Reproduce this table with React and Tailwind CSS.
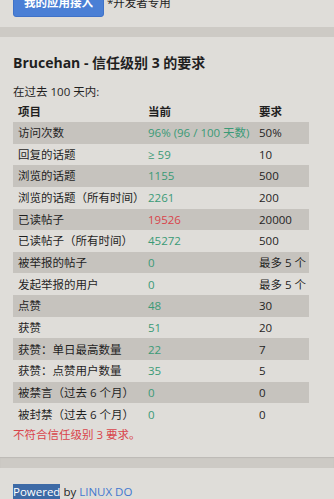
const rows = [
  { name: "访问次数", cur: "96% (96 / 100 天数)", req: "50%" },
  { name: "回复的话题", cur: "≥ 59", req: "10" },
  { name: "浏览的话题", cur: "1155", req: "500" },
  { name: "浏览的话题（所有时间）", cur: "2261", req: "200" },
  { name: "已读帖子", cur: "19526", req: "20000", bad: true },
  { name: "已读帖子（所有时间）", cur: "45272", req: "500" },
  { name: "被举报的帖子", cur: "0", req: "最多 5 个" },
  { name: "发起举报的用户", cur: "0", req: "最多 5 个" },
  { name: "点赞", cur: "48", req: "30" },
  { name: "获赞", cur: "51", req: "20" },
  { name: "获赞：单日最高数量", cur: "22", req: "7" },
  { name: "获赞：点赞用户数量", cur: "35", req: "5" },
  { name: "被禁言（过去 6 个月）", cur: "0", req: "0" },
  { name: "被封禁（过去 6 个月）", cur: "0", req: "0" },
];

export default function App() {
  return (
    <div
      className="h-[499px] w-[334px] overflow-hidden bg-[#dfddd9] text-[11.5px] text-[#1f1f1f]"
      style={{ fontFamily: '"Open Sans", "Noto Sans CJK SC", sans-serif' }}
    >
      <div className="h-[27px] overflow-hidden px-[13px] shadow-[0_1px_2px_rgba(0,0,0,0.12)]">
        <div className="-mt-[11px] flex items-center gap-[3px]">
          <button className="h-[28px] w-[91px] rounded-[3px] border border-[#3f72c8] bg-[#4a7fd5] text-[11.5px] font-bold text-white">
            我的应用接入
          </button>
          <span>*开发者专用</span>
        </div>
      </div>
      <div className="h-[10px] bg-[#cdcac5]" />

      <section className="h-[420px] px-[13px] pt-[17px]">
        <h2 className="h-[18px] text-[14px] font-bold leading-[18px]">Brucehan - 信任级别 3 的要求</h2>
        <p className="mt-[11px] leading-[17px]">在过去 100 天内:</p>
        <table className="mt-[1px] w-[296px] table-fixed border-collapse">
          <thead>
            <tr className="h-[21px] font-bold">
              <th className="w-[130px] pl-[5px] text-left">项目</th>
              <th className="w-[111px] pl-[5px] text-left">当前</th>
              <th className="pl-[5px] text-left">要求</th>
            </tr>
          </thead>
          <tbody>
            {rows.map((r, i) => (
              <tr key={r.name} className={i % 2 === 0 ? "h-[21.65px] bg-[#c6c3be]" : "h-[21.65px]"}>
                <td className="whitespace-nowrap pl-[5px]">{r.name}</td>
                <td className={r.bad ? "whitespace-nowrap pl-[5px] text-[#d9444b]" : "whitespace-nowrap pl-[5px] text-[#3a9a76]"}>
                  {r.cur}
                </td>
                <td className="whitespace-nowrap pl-[5px]">{r.req}</td>
              </tr>
            ))}
          </tbody>
        </table>
        <p className="mt-[1px] leading-[17px] text-[#d9444b]">不符合信任级别 3 要求。</p>
      </section>

      <div className="h-[11px] bg-[#cdcac5] shadow-[inset_0_1px_1px_rgba(0,0,0,0.08)]" />
      <footer className="px-[13px] pt-[16px] leading-[16px]">
        <span className="bg-[#3d6aa6] text-white">Powered</span> by{" "}
        <span className="text-[#3f78d0]">LINUX DO</span>
      </footer>
    </div>
  );
}
